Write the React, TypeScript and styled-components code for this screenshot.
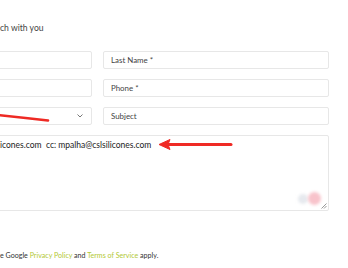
import React from "react";
import styled, { createGlobalStyle } from "styled-components";

const Global = createGlobalStyle`
  html, body { margin: 0; padding: 0; background: #ffffff; }
  body { font-family: Lato, "Noto Sans", sans-serif; }
`;

const Page = styled.div`
  position: relative;
  width: 348px;
  height: 268px;
  overflow: hidden;
  background: #fff;
`;

const Form = styled.form`
  width: 463px;
  margin-left: -134px;
  padding-top: 21px;
  display: flex;
  flex-direction: column;
`;

/* Part of a line that lies left of the visible edge: its end sits at a fixed x. */
const Lead = styled.span<{ $w: number }>`
  display: inline-flex;
  justify-content: flex-end;
  width: ${(p) => p.$w}px;
  flex-shrink: 0;
  white-space: nowrap;
  vertical-align: top;
`;

const Heading = styled.h3`
  margin: 0 0 16px 0;
  display: flex;
  font-size: 8.6px;
  font-weight: 400;
  color: #444;
  line-height: 14px;
  white-space: nowrap;
`;

const Grid = styled.div`
  display: grid;
  grid-template-columns: 226px 226px;
  column-gap: 11px;
  row-gap: 10px;
`;

const Field = styled.div`
  position: relative;
  height: 18px;
  box-sizing: border-box;
  border: 1px solid #e7e7e7;
  border-radius: 2px;
  display: flex;
  align-items: center;
  padding: 0 7px;
  font-size: 7.9px;
  color: #444;
  background: #fff;
`;

const Chevron = styled.svg`
  position: absolute;
  right: 8px;
  top: 6px;
`;

const Message = styled.div`
  grid-column: 1 / span 2;
  position: relative;
  height: 76px;
  box-sizing: border-box;
  border: 1px solid #e7e7e7;
  border-radius: 2px;
  padding: 3px 7px;
  font-size: 8.5px;
  line-height: 12px;
  color: #222;
  white-space: nowrap;
`;

const MessageLine = styled.div`
  display: flex;
`;

const Resize = styled.svg`
  position: absolute;
  right: 1px;
  bottom: 1px;
`;

const Blob = styled.div<{ $x: number; $y: number; $r: number; $c: string }>`
  position: absolute;
  left: ${(p) => p.$x - p.$r}px;
  top: ${(p) => p.$y - p.$r}px;
  width: ${(p) => p.$r * 2}px;
  height: ${(p) => p.$r * 2}px;
  border-radius: 50%;
  background: ${(p) => p.$c};
  filter: blur(1.5px);
`;

const Footer = styled.p`
  margin: 40px 0 0 0;
  display: flex;
  font-size: 7.1px;
  line-height: 10px;
  color: #333;
  white-space: nowrap;
`;

const Link = styled.span`
  color: #b3c935;
`;

const Overlay = styled.svg`
  position: absolute;
  left: 0;
  top: 0;
  pointer-events: none;
`;

export default function App() {
  return (
    <Page>
      <Global />
      <Form>
        <Heading>
          <Lead $w={134}>Let us get in tou</Lead>
          <span>ch with you</span>
        </Heading>
        <Grid>
          <Field>First Name *</Field>
          <Field>Last Name *</Field>
          <Field>Email *</Field>
          <Field>Phone *</Field>
          <Field>
            Select a topic
            <Chevron width="6" height="4" viewBox="0 0 6 4">
              <path d="M0.5 0.5 L3 3 L5.5 0.5" fill="none" stroke="#777" strokeWidth="1" />
            </Chevron>
          </Field>
          <Field>Subject</Field>
          <Message>
            <MessageLine>
              <Lead $w={126}>to: sales@cslsil</Lead>
              <span>icones.com&nbsp;&nbsp;cc: mpalha@cslsilicones.com</span>
            </MessageLine>
            <Blob $x={302 + 134} $y={198 - 135} $r={5} $c="#e6e9ee" />
            <Blob $x={313 + 134} $y={197 - 135} $r={6.5} $c="#f8c3cb" />
            <Resize width="6" height="6" viewBox="0 0 6 6">
              <path d="M5.5 0.5 L0.5 5.5 M5.5 3 L3 5.5" stroke="#999" strokeWidth="1" />
            </Resize>
          </Message>
        </Grid>
        <Footer>
          <Lead $w={134}>This site is protected by reCAPTCHA and th</Lead>
          <span>
            e Google <Link>Privacy Policy</Link> and <Link>Terms of Service</Link> apply.
          </span>
        </Footer>
      </Form>
      <Overlay width="348" height="268" viewBox="0 0 348 268">
        <path d="M-2 115 Q 22 117.5 48 120.5" fill="none" stroke="#ee2a24" strokeWidth="2.6" strokeLinecap="round" />
        <path d="M231 144.5 L166 144.5" fill="none" stroke="#ef2a25" strokeWidth="3" strokeLinecap="round" />
        <path d="M159 144.5 L170 139.5 L168 144.5 L170 149.5 Z" fill="#ef2a25" stroke="#ef2a25" strokeWidth="1" strokeLinejoin="round" />
      </Overlay>
    </Page>
  );
}
